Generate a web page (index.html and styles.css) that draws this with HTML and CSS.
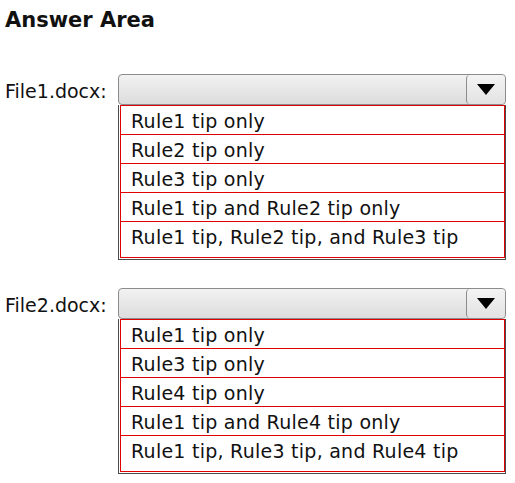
FILE: index.html
```html
<!DOCTYPE html>
<html>
<head>
<meta charset="utf-8">
<link rel="stylesheet" href="styles.css">
</head>
<body>
<div class="page">
  <h1 class="title">Answer Area</h1>
  <div class="field field-1">
    <div class="label">File1.docx:</div>
    <div class="combo">
      <div class="select">
        <div class="btn"><span class="tri"></span></div>
      </div>
      <div class="list">
        <div class="row">Rule1 tip only</div>
        <div class="row">Rule2 tip only</div>
        <div class="row">Rule3 tip only</div>
        <div class="row">Rule1 tip and Rule2 tip only</div>
        <div class="row last">Rule1 tip, Rule2 tip, and Rule3 tip</div>
      </div>
    </div>
  </div>
  <div class="field field-2">
    <div class="label">File2.docx:</div>
    <div class="combo">
      <div class="select">
        <div class="btn"><span class="tri"></span></div>
      </div>
      <div class="list">
        <div class="row">Rule1 tip only</div>
        <div class="row">Rule3 tip only</div>
        <div class="row">Rule4 tip only</div>
        <div class="row">Rule1 tip and Rule4 tip only</div>
        <div class="row last">Rule1 tip, Rule3 tip, and Rule4 tip</div>
      </div>
    </div>
  </div>
</div>
</body>
</html>
```
FILE: styles.css
```css
html, body {
  margin: 0;
  padding: 0;
  background: #ffffff;
}
body {
  font-family: "DejaVu Sans", Verdana, sans-serif;
  color: #111111;
  width: 515px;
  height: 483px;
  overflow: hidden;
}
.page {
  padding: 6px 0 0 5px;
}
.title {
  margin: 0;
  font-size: 21px;
  font-weight: bold;
  line-height: 28px;
  color: #111;
}
.field {
  display: flex;
  align-items: flex-start;
}
.field-1 {
  margin-top: 40px;
}
.field-2 {
  margin-top: 28px;
}
.label {
  width: 113px;
  font-size: 19px;
  line-height: 22px;
  padding-top: 6px;
}
.combo {
  width: 388px;
}
.select {
  height: 29px;
  border: 1px solid #8c8c8c;
  border-radius: 4px;
  background: linear-gradient(#f2f2f2, #dcdcdc);
  display: flex;
  justify-content: flex-end;
}
.btn {
  width: 38px;
  height: 29px;
  border-left: 1px solid #8c8c8c;
  border-radius: 4px;
  background: linear-gradient(#f4f4f4, #e2e2e2);
  display: flex;
  align-items: center;
  justify-content: center;
}
.tri {
  width: 0;
  height: 0;
  border-left: 9px solid transparent;
  border-right: 9px solid transparent;
  border-top: 11px solid #000;
}
.list {
  border: 1px solid #4a4a4a;
  border-top: none;
  padding: 0 0 1px 1px;
}
.row {
  border: 1px solid #e10000;
  margin-top: -1px;
  font-size: 19px;
  line-height: 22px;
  letter-spacing: 0.25px;
  padding: 4px 0 0 10px;
  box-sizing: border-box;
  height: 30px;
}
.row:first-child {
  margin-top: 0;
}
.row.last {
  height: 37px;
}
```
